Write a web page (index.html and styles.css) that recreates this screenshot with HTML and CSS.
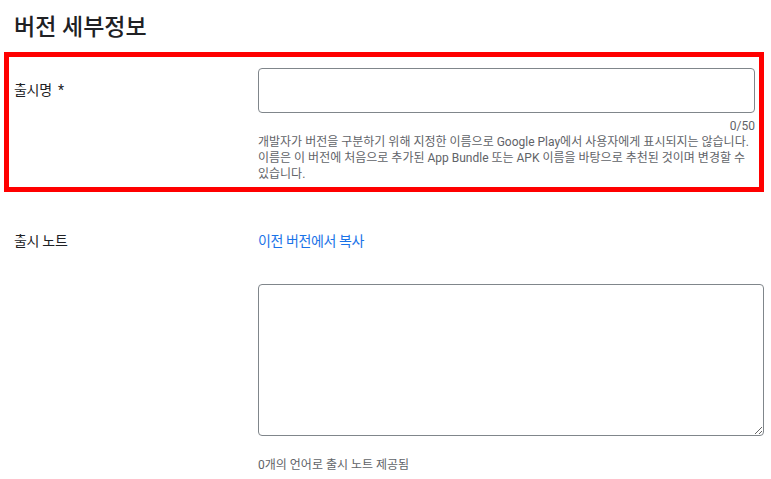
FILE: index.html
```html
<!DOCTYPE html>
<html lang="ko">
<head>
    <meta charset="UTF-8">
    <meta name="viewport" content="width=device-width, initial-scale=1.0">
    <title>버전 세부정보</title>
    <link rel="stylesheet" href="styles.css">
</head>
<body>

    <!-- Page Title -->
    <h1 class="title">버전 세부정보</h1>

    <!-- Release name (highlighted) -->
    <div class="row highlight">
        <label class="label label-name" for="releaseName">출시명 &nbsp;*</label>
        <div class="field">
            <input type="text" id="releaseName" class="text-input" maxlength="50">
            <div class="counter">0/50</div>
            <p class="help">개발자가 버전을 구분하기 위해 지정한 이름으로 Google Play에서 사용자에게 표시되지는 않습니다. 이름은 이 버전에 처음으로 추가된 App Bundle 또는 APK 이름을 바탕으로 추천된 것이며 변경할 수 있습니다.</p>
        </div>
    </div>

    <!-- Release notes -->
    <div class="row notes">
        <div class="label">출시 노트</div>
        <div class="field">
            <a href="#" class="copy-link">이전 버전에서 복사</a>
            <textarea class="text-area"></textarea>
            <p class="lang-count">0개의 언어로 출시 노트 제공됨</p>
        </div>
    </div>

</body>
</html>
```

FILE: styles.css
```css
body {
    font-family: Roboto, "Noto Sans CJK KR", sans-serif;
    background-color: #ffffff;
    color: #202124;
    margin: 0;
    padding: 0 7px 0 4px;
}

/* Page Title */
.title {
    font-size: 23px;
    font-weight: 500;
    line-height: 28px;
    margin: 0;
    padding: 14px 0 10px 10px;
}

.row {
    display: flex;
}

.label {
    width: 244px;
    flex-shrink: 0;
    font-size: 14px;
    line-height: 20px;
    letter-spacing: -0.3px;
}

.field {
    flex: 1;
    min-width: 0;
}

/* Highlighted block */
.highlight {
    border: 5px solid #ff0000;
    padding: 11px 4px 5px 5px;
}

.label-name {
    padding-top: 12px;
}

.text-input {
    display: block;
    width: 100%;
    height: 45px;
    box-sizing: border-box;
    border: 1px solid #80868b;
    border-radius: 4px;
    margin: 0;
    padding: 0 12px;
    font-size: 14px;
}

.counter {
    text-align: right;
    font-size: 12px;
    line-height: 16px;
    color: #5f6368;
    margin-top: 5px;
}

.help {
    margin: 0;
    font-size: 12px;
    line-height: 16px;
    color: #5f6368;
}

/* Release notes */
.notes {
    padding: 39px 0 0 10px;
}

.copy-link {
    display: block;
    font-size: 14px;
    line-height: 20px;
    letter-spacing: -0.4px;
    color: #1a73e8;
    text-decoration: none;
}

.text-area {
    display: block;
    width: 100%;
    height: 152px;
    box-sizing: border-box;
    border: 1px solid #80868b;
    border-radius: 4px;
    margin: 33px 0 0 0;
    padding: 12px;
    font-family: inherit;
    font-size: 14px;
}

.lang-count {
    margin: 21px 0 0 0;
    font-size: 12px;
    line-height: 16px;
    color: #5f6368;
}
```
